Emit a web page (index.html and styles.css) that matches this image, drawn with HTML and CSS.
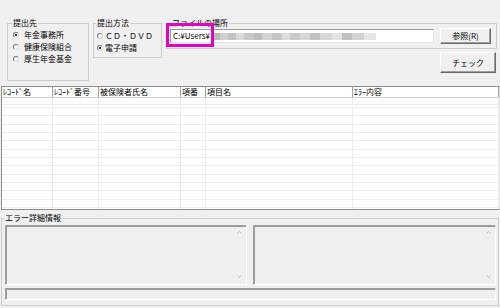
FILE: index.html
```html
<!doctype html>
<html lang="ja">
  <head>
    <meta charset="UTF-8" />
    <title>エラーチェック</title>
    <link rel="stylesheet" href="styles.css">
  </head>
  <body>
    <div class="top">
      <fieldset class="group group-dest">
        <legend>提出先</legend>
        <div class="options">
          <label class="option"><span class="radio checked"></span>年金事務所</label>
          <label class="option"><span class="radio"></span>健康保険組合</label>
          <label class="option"><span class="radio"></span>厚生年金基金</label>
        </div>
      </fieldset>

      <fieldset class="group group-method">
        <legend>提出方法</legend>
        <div class="options">
          <label class="option"><span class="radio"></span>ＣＤ・ＤＶＤ</label>
          <label class="option"><span class="radio checked"></span>電子申請</label>
        </div>
      </fieldset>

      <div class="file-col">
        <fieldset class="group group-file">
          <legend>ファイルの場所</legend>
          <div class="file-row">
            <div class="path-field">
              <span class="path-text">C:¥Users¥</span>
              <span class="path-blur"></span>
            </div>
            <button class="btn btn-browse" type="button">参照(R)</button>
          </div>
        </fieldset>
        <button class="btn btn-check" type="button">チェック</button>
        <div class="highlight"></div>
      </div>
    </div>

    <div class="list">
      <div class="list-head">
        <div class="cell c1">ﾚｺｰﾄﾞ名</div>
        <div class="cell c2">ﾚｺｰﾄﾞ番号</div>
        <div class="cell c3">被保険者氏名</div>
        <div class="cell c4">項番</div>
        <div class="cell c5">項目名</div>
        <div class="cell c6">ｴﾗｰ内容</div>
      </div>
      <div class="list-body">
        <div class="cell c1"></div>
        <div class="cell c2"></div>
        <div class="cell c3"></div>
        <div class="cell c4"></div>
        <div class="cell c5"></div>
        <div class="cell c6"></div>
      </div>
    </div>

    <fieldset class="group group-detail">
      <legend>エラー詳細情報</legend>
      <div class="detail-body">
        <div class="panes">
          <div class="pane pane-left">
            <svg class="arrow" width="5" height="3" viewBox="0 0 5 3"><polyline points="0.5,2.5 2.5,0.5 4.5,2.5" /></svg>
            <svg class="arrow" width="5" height="3" viewBox="0 0 5 3"><polyline points="0.5,0.5 2.5,2.5 4.5,0.5" /></svg>
          </div>
          <div class="pane pane-right">
            <svg class="arrow" width="5" height="3" viewBox="0 0 5 3"><polyline points="0.5,2.5 2.5,0.5 4.5,2.5" /></svg>
            <svg class="arrow" width="5" height="3" viewBox="0 0 5 3"><polyline points="0.5,0.5 2.5,2.5 4.5,0.5" /></svg>
          </div>
        </div>
        <div class="status"></div>
      </div>
    </fieldset>
  </body>
</html>
```

FILE: styles.css
```css
*,
*:before,
*:after {
  box-sizing: border-box;
}

body {
  width: 500px;
  height: 308px;
  margin: 0;
  overflow: hidden;
  background-color: #f0f0f0;
  color: #000;
  font: 8px/10px "Noto Sans CJK JP", sans-serif;
}

/* Group boxes */
.group {
  min-width: 0;
  margin: 0;
  padding: 0;
  border: 1px solid #cdcdcd;
}

.group legend {
  margin-left: 4px;
  padding: 0 1px;
  font-size: 8px;
  line-height: 10px;
}

.top {
  display: flex;
  align-items: flex-start;
  height: 81px;
  padding: 18px 0 0 7px;
}

.group-dest {
  width: 82px;
  height: 63px;
}

.group-dest .options {
  padding: 1px 0 0 5px;
}

.group-method {
  width: 69px;
  height: 40px;
  margin-left: 4px;

  & legend {
    margin-left: 2px;
  }

  & .options {
    padding: 2px 0 0 3px;
  }

  & .option {
    gap: 2px;
  }
}

.option {
  display: flex;
  align-items: center;
  height: 12px;
  gap: 5px;
  white-space: nowrap;
}

.radio {
  position: relative;
  flex: none;
  width: 6px;
  height: 6px;
  border: 1px solid;
  border-color: #7a7a7a #dadada #dadada #7a7a7a;
  border-radius: 50%;
  background-color: #fff;

  &.checked::after {
    position: absolute;
    top: 1px;
    left: 1px;
    width: 2px;
    height: 2px;
    border-radius: 50%;
    background-color: #000;
    content: '';
  }
}

/* File location */
.file-col {
  display: flex;
  position: relative;
  flex-direction: column;
  align-items: flex-end;
  margin-left: 4px;
}

.group-file {
  width: 331px;
  height: 31px;
}

.file-row {
  display: flex;
  align-items: center;
  height: 16px;
  padding: 0 5px 0 3px;
  gap: 6px;
}

.path-field {
  display: flex;
  align-items: center;
  width: 264px;
  height: 14px;
  padding-left: 2px;
  border: 1px solid;
  border-color: #9a9a9a #e3e3e3 #e3e3e3 #9a9a9a;
  background-color: #fff;
  gap: 4px;
}

.path-text {
  font-size: 8px;
}

.path-blur {
  width: 162px;
  height: 7px;
  background-image: linear-gradient(to right,
    #b9b9b9 0 6px, #cfcfcf 6px 14px, #c2c2c2 14px 22px, #d9d9d9 22px 30px,
    #c8c8c8 30px 40px, #bdbdbd 40px 48px, #d3d3d3 48px 58px, #c6c6c6 58px 68px,
    #dcdcdc 68px 76px, #cacaca 76px 86px, #d6d6d6 86px 96px, #c3c3c3 96px 106px,
    #d8d8d8 106px 118px, #e4e4e4 118px 128px, #c0c0c0 128px 138px, #d2d2d2 138px 150px,
    #e6e6e6 150px 162px);
}

.btn {
  padding: 0;
  border: 1px solid;
  border-color: #fff #696969 #696969 #fff;
  background-color: #f0f0f0;
  box-shadow: inset -1px -1px 0 #a0a0a0;
  color: #000;
  font: inherit;
}

.btn-browse {
  flex: none;
  width: 51px;
  height: 16px;
}

.btn-check {
  width: 56px;
  height: 21px;
  margin: 3px 1px 0 0;
}

/* Annotation over the path */
.highlight {
  position: absolute;
  top: 5px;
  left: 0;
  width: 48px;
  height: 24px;
  border: 3px solid #e400c6;
}

/* List view */
.list {
  display: flex;
  flex-direction: column;
  width: 499px;
  height: 124px;
  margin: 5px 0 0 1px;
  border: 1px solid #8c8c8c;
  border-right-color: #e3e3e3;
  background-color: #fff;
}

.list-head {
  display: flex;
  height: 11px;
  border-bottom: 1px solid #d0d0d0;

  & .cell {
    padding-left: 1px;
    border-right: 1px solid #a0a0a0;
    line-height: 10px;
    white-space: nowrap;
  }
}

.list-body {
  display: flex;
  flex: 1;
  background-image: repeating-linear-gradient(to bottom, #ececec 0 1px, transparent 1px 8.33px);
  background-position: 0 9px;

  & .cell {
    border-right: 1px solid #ededed;
  }
}

.c1 { width: 51px; }
.c2 { width: 46px; }
.c3 { width: 82px; padding-left: 2px; }
.c4 { width: 25px; padding-left: 2px; }
.c5 { width: 147px; padding-left: 3px; }
.c6 { flex: 1; padding-left: 3px; }

/* Error details */
.group-detail {
  width: 498px;
  height: 93px;
  margin: 3px 0 0 1px;

  & legend {
    margin-left: 2px;
  }
}

.detail-body {
  padding: 2px 2px 0 3px;
}

.panes {
  display: flex;
  gap: 6px;
}

.pane {
  display: flex;
  flex-direction: column;
  align-items: flex-end;
  justify-content: space-between;
  height: 60px;
  padding: 5px 4px 6px 0;
  border: 1px solid;
  border-color: #a0a0a0 #fff #fff #a0a0a0;
  box-shadow: inset 1px 1px 0 #9a9a9a;
}

.pane-left { width: 242px; }
.pane-right { width: 243px; }

.arrow polyline {
  fill: none;
  stroke: #b9b9b9;
  stroke-width: 1;
}

.status {
  height: 12px;
  margin-top: 3px;
  border: 1px solid;
  border-color: #a0a0a0 #fff #fff #a0a0a0;
  box-shadow: inset 1px 1px 0 #9a9a9a;
}
```
